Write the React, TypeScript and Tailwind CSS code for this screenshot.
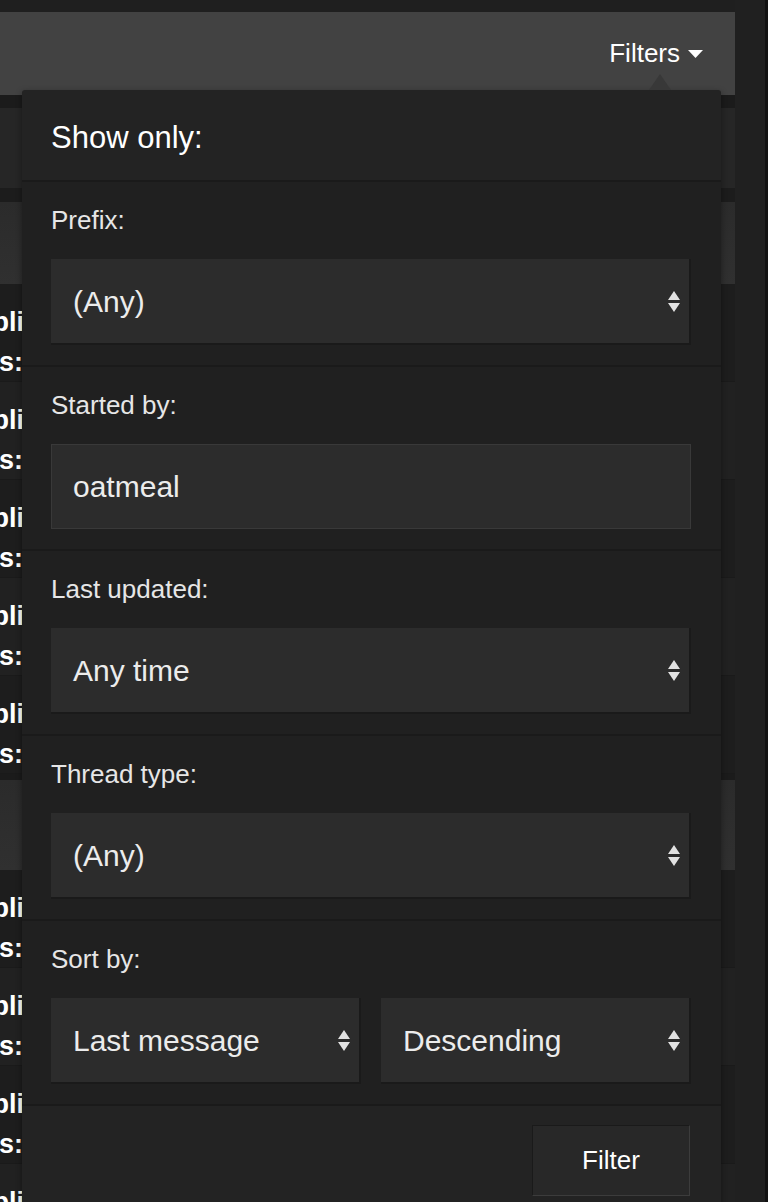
import React from 'react';

const ROWS_A = [0, 1, 2, 3, 4];
const ROWS_B = [0, 1, 2, 3];

function Arrows() {
  return (
    <svg width="12" height="21" viewBox="0 0 12 21" className="shrink-0">
      <polygon points="6,0 12,9 0,9" fill="#e2e2e2" />
      <polygon points="0,12 12,12 6,21" fill="#e2e2e2" />
    </svg>
  );
}

function FakeSelect({ value }: { value: string }) {
  return (
    <div className="flex h-[86px] items-center justify-between bg-[#2c2c2c] border-r-2 border-b-2 border-[#1a1a1a] pl-[22px] pr-[9px]">
      <span className="text-[30px] text-[#ececec]">{value}</span>
      <Arrows />
    </div>
  );
}

function Section({ label, children }: { label: string; children: React.ReactNode }) {
  return (
    <div className="border-t-2 border-[#1a1a1a] bg-[#202020] pl-[29px] pr-[30px] pt-[23px] pb-[20px]">
      <div className="text-[26px] leading-[30px] text-[#e6e6e6] mb-[24px]">{label}</div>
      {children}
    </div>
  );
}

function ThreadRow({ alt }: { alt: boolean }) {
  return (
    <div className={`h-[98px] border-b border-[#1a1a1a] ${alt ? 'bg-[#212121]' : 'bg-[#1d1d1d]'}`}>
      <div className="w-[22px] overflow-hidden pt-[18px] font-bold text-[27px] leading-[40px] text-white">
        <div className="-ml-[42px] whitespace-nowrap">Replies:</div>
        <div className="-ml-[62px] whitespace-nowrap">Views:</div>
      </div>
    </div>
  );
}

export default function App() {
  return (
    <div className="relative flex w-[768px] h-[1202px] overflow-hidden bg-[#1f1f1f] font-['Liberation_Sans',Arial,sans-serif]">
      {/* page behind the popup */}
      <div className="w-[735px] pt-[12px] flex flex-col">
        <div className="h-[83px] bg-[#424242] flex items-center justify-end pr-[32px] shrink-0">
          <span className="text-[26px] text-white">Filters</span>
          <svg width="15" height="8" viewBox="0 0 15 8" className="ml-[8px]">
            <polygon points="0,0 15,0 7.5,8" fill="#ffffff" />
          </svg>
        </div>
        <div className="h-[13px] bg-[#1b1b1b] shrink-0" />
        <div className="h-[80px] bg-[#262626] shrink-0" />
        <div className="h-[14px] bg-[#1c1c1c] shrink-0" />
        <div className="h-[82px] bg-gradient-to-b from-[#2b2b2b] to-[#303030] shrink-0" />
        {ROWS_A.map(i => (
          <ThreadRow key={i} alt={i % 2 === 1} />
        ))}
        <div className="h-[6px] bg-[#1b1b1b] shrink-0" />
        <div className="h-[90px] bg-gradient-to-b from-[#2b2b2b] to-[#303030] shrink-0" />
        {ROWS_B.map(i => (
          <ThreadRow key={i} alt={i % 2 === 1} />
        ))}
      </div>
      <div className="w-[30px] bg-[#202020]" />
      <div className="w-[3px] bg-[#121212]" />

      {/* Filters popup */}
      <div className="absolute left-[22px] top-[90px] w-[699px] rounded-t-[3px] bg-[#232323] shadow-[0_2px_6px_rgba(0,0,0,0.4)]">
        <svg width="22" height="16" viewBox="0 0 22 16" className="absolute -top-[16px] left-[627px]">
          <polygon points="11,0 22,16 0,16" fill="#383838" />
        </svg>
        <div className="pl-[29px] pt-[30px] pb-[24px] text-[31px] leading-[36px] text-white">Show only:</div>

        <Section label="Prefix:">
          <FakeSelect value="(Any)" />
        </Section>

        <Section label="Started by:">
          <div className="flex h-[85px] items-center border border-[#393939] bg-[#2c2c2c] pl-[21px]">
            <span className="text-[30px] text-[#ececec]">oatmeal</span>
          </div>
        </Section>

        <Section label="Last updated:">
          <FakeSelect value="Any time" />
        </Section>

        <Section label="Thread type:">
          <FakeSelect value="(Any)" />
        </Section>

        <Section label="Sort by:">
          <div className="grid grid-cols-2 gap-[20px]">
            <FakeSelect value="Last message" />
            <FakeSelect value="Descending" />
          </div>
        </Section>

        <div className="border-t-2 border-[#1a1a1a] bg-[#232323] flex justify-end pr-[31px] pt-[19px] pb-[20px]">
          <button className="w-[158px] h-[71px] bg-[#282828] border-t border-l border-t-[#1a1a1a] border-l-[#1a1a1a] border-r border-b border-r-[#3c3c3c] border-b-[#3c3c3c] text-[26px] text-white">
            Filter
          </button>
        </div>
      </div>
    </div>
  );
}
